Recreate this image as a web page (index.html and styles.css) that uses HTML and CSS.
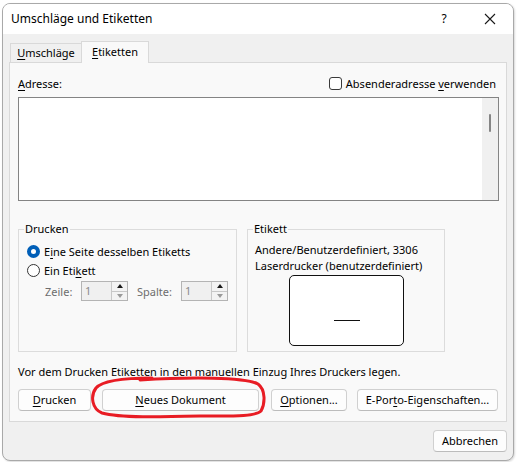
FILE: index.html
```html
<!DOCTYPE html>
<html lang="de">
<head>
<meta charset="utf-8">
<title>Umschläge und Etiketten</title>
<link rel="stylesheet" href="styles.css">
</head>
<body>
<div class="window">
  <div class="titlebar">
    <span class="title">Umschläge und Etiketten</span>
    <div class="controls">
      <span class="help">?</span>
      <span class="close"><svg width="12" height="12" viewBox="0 0 12 12"><path d="M1 1 L11 11 M11 1 L1 11" stroke="#1a1a1a" stroke-width="1.1" fill="none"/></svg></span>
    </div>
  </div>
  <div class="client">
    <div class="tabs">
      <div class="tab"><span><u>U</u>mschläge</span></div>
      <div class="tab active"><span><u>E</u>tiketten</span></div>
    </div>
    <div class="panel">
      <div class="toprow">
        <span><u>A</u>dresse:</span>
        <label class="check"><span class="box"></span><span>Absenderadresse <u>v</u>erwenden</span></label>
      </div>
      <div class="address">
        <div class="addr-text"></div>
        <div class="scrollbar"><span class="thumb"></span></div>
      </div>
      <div class="groups">
        <div class="group print">
          <span class="legend">Drucken</span>
          <div class="radio-row"><span class="radio on"></span><span>E<u>i</u>ne Seite desselben Etiketts</span></div>
          <div class="radio-row"><span class="radio"></span><span>Ein Eti<u>k</u>ett</span></div>
          <div class="spin-row">
            <span class="spin-label zeile">Zeile:</span>
            <span class="spin"><span class="spin-val">1</span><span class="spin-btns"><span class="up"></span><span class="down"></span></span></span>
            <span class="spin-label spalte">Spalte:</span>
            <span class="spin"><span class="spin-val">1</span><span class="spin-btns"><span class="up"></span><span class="down"></span></span></span>
          </div>
        </div>
        <div class="group label">
          <span class="legend">Etikett</span>
          <div class="label-line">Andere/Benutzerdefiniert, 3306</div>
          <div class="label-line">Laserdrucker (benutzerdefiniert)</div>
          <div class="preview"><span class="preview-line"></span></div>
        </div>
      </div>
      <div class="info">Vor dem Drucken Etiketten in den manuellen Einzug Ihres Druckers legen.</div>
      <div class="buttons">
        <button class="btn b-print"><u>D</u>rucken</button>
        <button class="btn b-new"><u>N</u>eues Dokument</button>
        <button class="btn b-opt"><u>O</u>ptionen...</button>
        <button class="btn b-porto">E-Por<u>t</u>o-Eigenschaften...</button>
      </div>
    </div>
    <div class="footer">
      <button class="btn b-cancel">Abbrechen</button>
    </div>
  </div>
</div>
<svg class="annotation" width="517" height="462" viewBox="0 0 517 462">
  <path d="M140 380 C 190 377, 245 377, 258 384 C 266 390, 265 404, 261 411 C 255 417, 230 416, 200 416 C 160 417, 120 418, 102 413 C 92 409, 90 396, 96 388 C 103 380, 125 378, 152 378" fill="none" stroke="#e81c24" stroke-width="3" stroke-linecap="round" stroke-linejoin="round"/>
</svg>
</body>
</html>
```
FILE: styles.css
```css
* { box-sizing: border-box; }
html, body { margin: 0; padding: 0; }
body {
  width: 517px;
  height: 462px;
  background: #ffffff;
  position: relative;
  overflow: hidden;
  font-family: "Noto Sans", "Open Sans", sans-serif;
  font-size: 11px;
  color: #000;
}
u { text-decoration: underline; text-underline-offset: 2px; text-decoration-thickness: 1px; }

.window {
  margin: 3px 0 0 2px;
  width: 512px;
  height: 458px;
  border: 1px solid #a9a9a9;
  border-radius: 8px;
  background: #f0f0f0;
  overflow: hidden;
  display: flex;
  flex-direction: column;
  box-shadow: 1px 1px 2px rgba(0,0,0,0.15);
}
.titlebar {
  height: 30px;
  flex: none;
  background: #ffffff;
  display: flex;
  align-items: center;
  justify-content: space-between;
  padding-left: 8px;
}
.title { font-size: 12px; line-height: 16px; }
.controls { display: flex; align-items: center; height: 30px; }
.help { width: 46px; text-align: center; font-size: 12px; line-height: 16px; }
.close { width: 46px; height: 30px; display: flex; align-items: center; justify-content: center; }

.client { flex: 1; display: flex; flex-direction: column; padding: 0 6px; }
.tabs { display: flex; align-items: flex-end; height: 21px; margin-top: 7px; padding-left: 1px; }
.tab {
  height: 19px;
  width: 72px;
  border: 1px solid #d9d9d9;
  border-bottom: none;
  background: #f0f0f0;
  display: flex;
  align-items: center;
  justify-content: center;
  line-height: 14px;
}
.tab.active {
  height: 22px;
  width: 68px;
  margin-left: -1px;
  margin-bottom: -1px;
  background: #f9f9f9;
  position: relative;
  z-index: 1;
  padding-bottom: 2px;
}
.panel {
  height: 360px;
  border: 1px solid #d9d9d9;
  background: #f9f9f9;
  padding: 11px 0 10px 8px;
  display: flex;
  flex-direction: column;
}
.toprow {
  height: 18px;
  display: flex;
  align-items: center;
  justify-content: space-between;
  padding-right: 10px;
}
.check { display: flex; align-items: center; }
.box {
  width: 13px; height: 13px;
  border: 1px solid #3a3a3a;
  border-radius: 3px;
  background: #fff;
  margin-right: 4px;
}
.address {
  margin-top: 5px;
  width: 481px;
  height: 104px;
  border: 1px solid #848484;
  background: #fff;
  display: flex;
}
.addr-text { flex: 1; }
.scrollbar {
  width: 16px;
  background: #f0f0f0;
  display: flex;
  justify-content: center;
  padding-top: 16px;
}
.thumb { width: 2px; height: 18px; background: #858585; border-radius: 1px; }

.groups { margin-top: 28px; height: 123px; display: flex; gap: 10px; }
.group {
  position: relative;
  border: 1px solid #dcdcdc;
  height: 123px;
}
.group.print { width: 219px; padding: 12px 0 0 8px; }
.group.label { width: 198px; padding: 12px 0 0 7px; }
.legend {
  position: absolute;
  top: -9px;
  left: 5px;
  padding: 0 1px;
  background: #f9f9f9;
  line-height: 16px;
}
.radio-row { height: 19px; display: flex; align-items: center; }
.radio {
  width: 13px; height: 13px;
  border-radius: 50%;
  border: 1px solid #333;
  background: #fff;
  margin-right: 4px;
  flex: none;
}
.radio.on {
  border: 4px solid #005fb8;
  background: #fff;
}
.spin-row { margin-top: 1px; height: 20px; display: flex; align-items: center; padding-left: 18px; }
.spin-label { color: #6d6d6d; }
.zeile { width: 36px; }
.spalte { width: 44px; margin-left: 9px; }
.spin {
  width: 47px; height: 20px;
  border: 1px solid #b4b4b4;
  display: flex;
  background: #f0f0f0;
}
.spin-val { flex: 1; color: #8a8a8a; padding-left: 3px; line-height: 18px; }
.spin-btns { width: 16px; border-left: 1px solid #c8c8c8; display: flex; flex-direction: column; background: #f3f3f3; }
.spin-btns span { flex: 1; display: flex; align-items: center; justify-content: center; }
.spin-btns .up { border-bottom: 1px solid #c8c8c8; }
.spin-btns .up::after {
  content: ""; border-left: 3.5px solid transparent; border-right: 3.5px solid transparent;
  border-bottom: 4px solid #1a1a1a;
}
.spin-btns .down::after {
  content: ""; border-left: 3.5px solid transparent; border-right: 3.5px solid transparent;
  border-top: 4px solid #9a9a9a;
}
.label-line { line-height: 16px; height: 16px; }
.preview {
  margin: 1px auto 0 34px;
  width: 115px; height: 71px;
  border: 1px solid #111;
  border-radius: 5px;
  background: #fff;
  display: flex;
  justify-content: center;
  padding-top: 44px;
}
.preview-line { width: 26px; height: 1px; background: #111; }

.info { margin-top: 12px; line-height: 16px; height: 16px; }
.buttons { margin-top: 9px; display: flex; height: 22px; }
.btn {
  font-family: "Noto Sans", "Open Sans", sans-serif;
  font-size: 11px;
  color: #000;
  height: 22px;
  background: #fdfdfd;
  border: 1px solid #d0d0d0;
  border-bottom-color: #bcbcbc;
  border-radius: 4px;
  padding: 0;
  line-height: 18px;
}
.b-print { width: 73px; }
.b-new { width: 157px; margin-left: 11px; }
.b-opt { width: 76px; margin-left: 12px; }
.b-porto { width: 141px; margin-left: 10px; }
.footer { display: flex; justify-content: flex-end; margin-top: 8px; }
.b-cancel { width: 74px; }

.annotation { position: absolute; left: 0; top: 0; pointer-events: none; }
```
